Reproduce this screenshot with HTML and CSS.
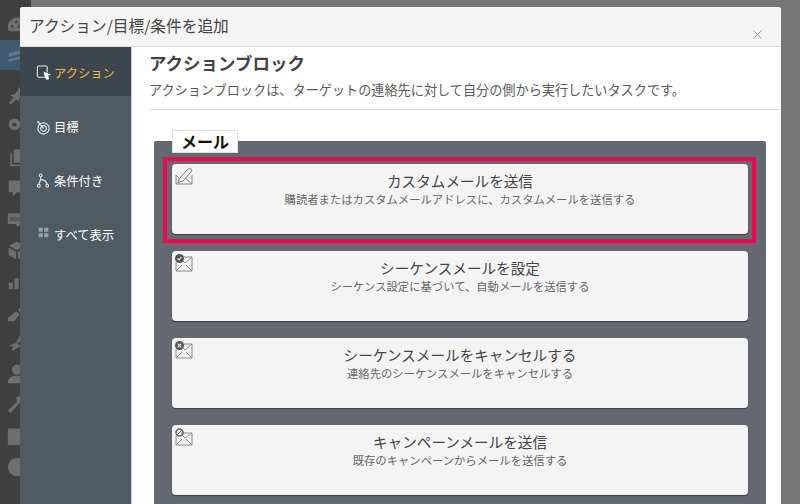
FILE: index.html
```html
<!DOCTYPE html>
<html lang="ja">
<head>
<meta charset="utf-8">
<title>アクション/目標/条件を追加</title>
<link rel="stylesheet" href="styles.css">
</head>
<body>
<div class="page">
  <nav class="rail">
    <div class="rail-row rail-first"><svg viewBox="0 0 24 24"><path fill-rule="evenodd" d="M12 3A11 11 0 0 0 1 14c0 2 .5 4 1.500 5.500h19C22.500 18 23 16 23 14A11 11 0 0 0 12 3zM6 12a1.500 1.500 0 1 0 .01 0zM11 7a1.500 1.500 0 1 0 .01 0zM12 15l5-6-3 7z"/></svg></div>
    <div class="rail-row rail-active"><svg viewBox="0 0 24 24"><path d="M2 10 22 5v4L2 14zM2 17l20-5v3L2 20z"/></svg></div>
    <div class="rail-list">
      <div class="rail-row"><svg viewBox="0 0 24 24"><path d="M14 2l8 8-3 1-4 4-1 5-3-3-6 6-3-1 6-7-4-3 5-1 4-4z"/></svg></div>
      <div class="rail-row"><svg viewBox="0 0 24 24"><path fill-rule="evenodd" d="M9 3a7 7 0 1 0 .01 0zM9 8a2.500 2.500 0 1 1-.01 0zM19 15a4 4 0 1 0 .01 0z"/></svg></div>
      <div class="rail-row"><svg viewBox="0 0 24 24"><path d="M8 3h14v16H8zM4 7h2v14h13v2H4z"/></svg></div>
      <div class="rail-row"><svg viewBox="0 0 24 24"><path d="M2 3h21v14H12l-5 5v-5H2z"/></svg></div>
      <div class="rail-row"><svg viewBox="0 0 24 24"><path class="woo-shape" d="M1 5h23v13H16l-3 4-3-4H1z"/><text class="woo-text" x="3" y="14.500">woo</text></svg></div>
      <div class="rail-row"><svg viewBox="0 0 24 24"><path d="M12 2l10 5-10 5L2 7zM2 9l9 5v9l-9-5zM22 9l-9 5v9l9-5z"/></svg></div>
      <div class="rail-row"><svg viewBox="0 0 24 24"><path d="M2 14h5v8H2zM9 9h5v13H9zM16 3h6v19h-6z"/></svg></div>
      <div class="rail-row"><svg viewBox="0 0 24 24"><path d="M13 9l9-7 2 3-7 9zM11 11l4 4-6 8H1v-4z"/></svg></div>
      <div class="rail-row"><svg viewBox="0 0 24 24"><path d="M16 2l6 6-10 4 4 4-10 6 1-6-5-1 9-3z"/></svg></div>
      <div class="rail-row"><svg viewBox="0 0 24 24"><circle cx="12" cy="7" r="6"/><path d="M1 23c0-7 5-9 11-9s11 2 11 9z"/></svg></div>
      <div class="rail-row"><svg viewBox="0 0 24 24"><path d="M22 2l2 5-4 4-5-1-11 12-3-3L12 8l-1-5 5-2z"/></svg></div>
      <div class="rail-row"><svg viewBox="0 0 24 24"><path d="M1 3h23v20H1z"/></svg></div>
      <div class="rail-row"><svg viewBox="0 0 24 24"><circle cx="12" cy="12" r="11"/></svg></div>
    </div>
  </nav>
  <div class="backdrop-main"></div>
</div>

<div class="modal">
  <header class="modal-head">
    <h1 class="modal-title">アクション/目標/条件を追加</h1>
    <svg class="modal-close" viewBox="0 0 10 10"><path d="M.5.5l9 9M9.500.5l-9 9"/></svg>
  </header>
  <div class="modal-body">
    <aside class="side">
      <div class="side-item is-active">
        <svg class="side-icon" viewBox="0 0 16 16"><path class="s-line" d="M10 13H3a1.500 1.500 0 0 1-1.500-1.500v-9A1.500 1.500 0 0 1 3 1h7.500A1.500 1.500 0 0 1 12 2.500V8"/><path class="s-fill" d="M8 7l8 3-3 1.500 1 3.500-2.500 1-2-3z"/></svg>
        <span>アクション</span>
      </div>
      <div class="side-item">
        <svg class="side-icon" viewBox="0 0 16 16"><circle class="s-line" cx="8" cy="9" r="6"/><circle class="s-line" cx="8" cy="9" r="3"/><path class="s-line" d="M8 9 3 3M1 2h2v2"/></svg>
        <span>目標</span>
      </div>
      <div class="side-item">
        <svg class="side-icon" viewBox="0 0 16 16"><circle class="s-line" cx="5" cy="2.500" r="1.500"/><circle class="s-line" cx="3" cy="13.500" r="1.500"/><circle class="s-line" cx="12" cy="13.500" r="1.500"/><path class="s-line" d="M5 4v3L3 12M5 7c3 0 6 2 7 5"/></svg>
        <span>条件付き</span>
      </div>
      <div class="side-item">
        <svg class="side-icon side-grid" viewBox="0 0 16 16"><path class="s-grey" d="M1 1h6v6H1zM9 1h6v6H9zM1 9h6v6H1zM9 9h6v6H9z"/></svg>
        <span>すべて表示</span>
      </div>
    </aside>
    <main class="content">
      <div class="intro">
        <h2 class="intro-title">アクションブロック</h2>
        <p class="intro-text">アクションブロックは、ターゲットの連絡先に対して自分の側から実行したいタスクです。</p>
      </div>
      <section class="panel">
        <div class="legend">メール</div>
        <div class="cards">
          <div class="card-wrap is-marked">
            <div class="card">
              <svg class="card-icon" viewBox="0 0 18 18"><path class="m-line" d="M1 8v9h16V8M1 17l6-5M17 17l-7-6M1 8l3 3"/><path class="m-pen" d="M4 12l9-10a1.500 1.500 0 0 1 3 3l-8 9-4.500 1.500z"/></svg>
              <div class="card-title">カスタムメールを送信</div>
              <div class="card-text">購読者またはカスタムメールアドレスに、カスタムメールを送信する</div>
            </div>
          </div>
          <div class="card-wrap">
            <div class="card">
              <svg class="card-icon" viewBox="0 0 18 18"><path class="m-line" d="M6 3h11v14H1V8M1 17l6-6M17 17l-6-6M6 5l4 4 7-6"/><circle class="m-dot" cx="4.500" cy="4.500" r="4.500"/><path class="m-mark" d="M2.500 4.500l1.500 1.500L6.500 3"/></svg>
              <div class="card-title">シーケンスメールを設定</div>
              <div class="card-text">シーケンス設定に基づいて、自動メールを送信する</div>
            </div>
          </div>
          <div class="card-wrap">
            <div class="card">
              <svg class="card-icon" viewBox="0 0 18 18"><path class="m-line" d="M6 3h11v14H1V8M1 17l6-6M17 17l-6-6M6 5l4 4 7-6"/><circle class="m-dot" cx="4.500" cy="4.500" r="4.500"/><path class="m-mark" d="M2.700 2.700l3.600 3.600M6.300 2.700l-3.600 3.600"/></svg>
              <div class="card-title">シーケンスメールをキャンセルする</div>
              <div class="card-text">連絡先のシーケンスメールをキャンセルする</div>
            </div>
          </div>
          <div class="card-wrap">
            <div class="card">
              <svg class="card-icon" viewBox="0 0 18 18"><path class="m-line" d="M6 5h11v12H1V8M1 17l6-6M17 17l-6-6M7 7l3 3 7-5"/><circle class="m-ring" cx="4.500" cy="4.500" r="3.500"/><path class="m-slash" d="M2 7l5-5"/></svg>
              <div class="card-title">キャンペーンメールを送信</div>
              <div class="card-text">既存のキャンペーンからメールを送信する</div>
            </div>
          </div>
        </div>
      </section>
    </main>
  </div>
</div>
</body>
</html>
```

FILE: styles.css
```css
* { box-sizing: border-box; }
html, body { margin: 0; height: 100%; overflow: hidden; }
body { font-family: "Noto Sans CJK JP", "Noto Sans", sans-serif; background: #767676; color: #333; }

.page { display: flex; height: 504px; }
.rail { width: 31px; background: #3f3f3f; padding-top: 10px; flex: none; }
.rail-row { height: 30px; display: flex; align-items: center; padding-left: 7px; }
.rail-row svg { width: 20px; height: 20px; fill: #6e6e6e; flex: none; }
.rail-active { background: #3f5a70; }
.rail-active svg { fill: #66788a; }
.rail-list { margin-top: 10px; display: flex; flex-direction: column; gap: 1px; }
.woo-text { fill: #3f3f3f; font-family: "Liberation Sans", sans-serif; font-size: 8px; }
.backdrop-main { flex: 1; background: #767676; }

.modal { position: absolute; left: 20px; top: 7px; width: 761px; height: 497px; background: #fff; border-radius: 3px 3px 0 0; overflow: hidden; display: flex; flex-direction: column; }
.modal-head { height: 40px; background: #f4f4f4; border-bottom: 1px solid #dcdcdc; display: flex; align-items: center; justify-content: space-between; padding: 0 19px 0 9px; flex: none; }
.modal-title { margin: 0 0 2px; font-size: 15.700px; font-weight: 400; color: #444; white-space: nowrap; }
.modal-close { width: 9px; height: 9px; margin-top: 15px; fill: none; stroke: #8a96a3; stroke-width: 1.100; }
.modal-body { display: flex; flex: 1; min-height: 0; }

.side { width: 112px; background: #505a63; flex: none; border-right: 1px solid #c9cfd4; }
.side-item { height: 54px; display: flex; align-items: center; gap: 3px; padding: 0 0 9px 16px; color: #fff; font-size: 12.300px; white-space: nowrap; }
.side-item.is-active { height: 49px; padding: 2px 0 0 16px; background: #3d464e; color: #f4bd3c; }
.side-item:nth-child(2) { height: 62px; padding-bottom: 0; }
.side-icon { width: 15px; height: 15px; flex: none; }
.side-grid { width: 11px; height: 11px; margin: 0 2px 5px 2px; }
.s-line { fill: none; stroke: #e4e4e4; stroke-width: 1.200; }
.s-fill { fill: #fff; }
.s-grey { fill: #9aa0a6; }

.content { flex: 1; min-width: 0; display: flex; flex-direction: column; }
.intro { height: 63px; margin-left: 17px; border-bottom: 1px solid #dcdcdc; padding-top: 3px; flex: none; }
.intro-title { margin: 0; font-size: 17.500px; line-height: 26px; font-weight: 700; color: #444; white-space: nowrap; }
.intro-text { margin: 4px 0 0; font-size: 13.150px; line-height: 20px; color: #5a5a5a; white-space: nowrap; }

.panel { position: relative; margin: 31px 15px 0 22px; background: #636871; flex: 1; padding: 16px 10px 0 9px; border-radius: 2px 2px 0 0; }
.legend { position: absolute; left: 18px; top: -11px; width: 66px; height: 23px; background: #fff; border: 1px solid #e2e2e2; color: #111; font-size: 16px; font-weight: 700; text-align: center; line-height: 21px; }
.cards { display: flex; flex-direction: column; gap: 17px; }
.card-wrap { padding: 0 8px 0 9px; }
.card-wrap.is-marked { padding: 7px 8px 9px 9px; margin-bottom: -9px; outline: 4px solid #f2074f; outline-offset: -4px; }
.card { position: relative; height: 70px; background: #f4f4f4; border-radius: 4px; box-shadow: 0 1px 1px #3b3f45; display: flex; flex-direction: column; align-items: center; padding-top: 7px; }
.card-title { font-size: 14.600px; line-height: 19px; color: #444; white-space: nowrap; }
.card-text { margin-top: 1px; font-size: 11.330px; line-height: 17px; color: #666; white-space: nowrap; }
.card-icon { position: absolute; left: 3px; top: 3px; width: 18px; height: 18px; }
.m-line { fill: #f4f4f4; stroke: #808080; stroke-width: 0.900; }
.m-pen { fill: #f4f4f4; stroke: #777; stroke-width: 1; }
.m-dot { fill: #555; }
.m-ring { fill: none; stroke: #666; stroke-width: 1.600; }
.m-slash { stroke: #666; stroke-width: 1; }
.m-mark { fill: none; stroke: #eee; stroke-width: 1.100; }
```
